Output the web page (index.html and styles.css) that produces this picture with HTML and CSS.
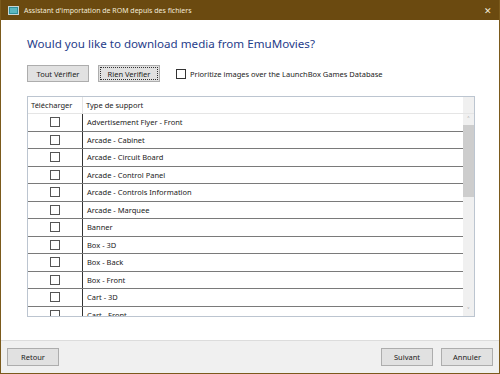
FILE: index.html
```html
<!DOCTYPE html>
<html lang="fr">
<head>
    <meta charset="UTF-8">
    <title>Assistant d'importation de ROM depuis des fichiers</title>
    <link rel="stylesheet" href="styles.css">
</head>
<body>
<div class="window">
    <div class="titlebar">
        <svg class="app-icon" width="11" height="9" viewBox="0 0 11 9">
            <rect x="0.5" y="0.5" width="10" height="8" fill="#2f8f9a" stroke="#c8d6d6"/>
            <rect x="2" y="2" width="7" height="5" fill="#5bb7bf"/>
        </svg>
        <span class="title">Assistant d'importation de ROM depuis des fichiers</span>
        <span class="close">&#x2715;</span>
    </div>

    <div class="content">
        <h1>Would you like to download media from EmuMovies?</h1>

        <div class="actions">
            <button class="btn">Tout Vérifier</button>
            <button class="btn focused">Rien Verifier</button>
            <label class="check-label"><span class="box"></span>Prioritize images over the LaunchBox Games Database</label>
        </div>

        <div class="grid">
            <div class="grid-head">
                <div class="col-dl">Télécharger</div>
                <div class="col-type">Type de support</div>
                <div class="col-pad"></div>
            </div>
            <div class="grid-body">
                <div class="rows">
                    <div class="row"><div class="cell-dl"><span class="box"></span></div><div class="cell-type">Advertisement Flyer - Front</div></div>
                    <div class="row"><div class="cell-dl"><span class="box"></span></div><div class="cell-type">Arcade - Cabinet</div></div>
                    <div class="row"><div class="cell-dl"><span class="box"></span></div><div class="cell-type">Arcade - Circuit Board</div></div>
                    <div class="row"><div class="cell-dl"><span class="box"></span></div><div class="cell-type">Arcade - Control Panel</div></div>
                    <div class="row"><div class="cell-dl"><span class="box"></span></div><div class="cell-type">Arcade - Controls Information</div></div>
                    <div class="row"><div class="cell-dl"><span class="box"></span></div><div class="cell-type">Arcade - Marquee</div></div>
                    <div class="row"><div class="cell-dl"><span class="box"></span></div><div class="cell-type">Banner</div></div>
                    <div class="row"><div class="cell-dl"><span class="box"></span></div><div class="cell-type">Box - 3D</div></div>
                    <div class="row"><div class="cell-dl"><span class="box"></span></div><div class="cell-type">Box - Back</div></div>
                    <div class="row"><div class="cell-dl"><span class="box"></span></div><div class="cell-type">Box - Front</div></div>
                    <div class="row"><div class="cell-dl"><span class="box"></span></div><div class="cell-type">Cart - 3D</div></div>
                    <div class="row"><div class="cell-dl"><span class="box"></span></div><div class="cell-type">Cart - Front</div></div>
                </div>
                <div class="scrollbar">
                    <span class="arrow">&#x2C4;</span>
                    <div class="track"><div class="thumb"></div></div>
                    <span class="arrow">&#x2C5;</span>
                </div>
            </div>
        </div>
    </div>

    <div class="footer">
        <button class="btn">Retour</button>
        <div class="footer-right">
            <button class="btn">Suivant</button>
            <button class="btn">Annuler</button>
        </div>
    </div>
</div>
</body>
</html>
```

FILE: styles.css
```css
html, body {
    margin: 0;
    padding: 0;
}

body {
    font-family: "Noto Sans", "Open Sans", sans-serif;
    background: #ffffff;
    color: #1a1a1a;
}

.window {
    width: 500px;
    height: 374px;
    box-sizing: border-box;
    border: 1px solid #7b5a1c;
    border-top: none;
    display: flex;
    flex-direction: column;
    background: #ffffff;
}

.titlebar {
    height: 20px;
    background: #6b4a10;
    display: flex;
    align-items: center;
    padding: 0 7px 0 7px;
    color: #f3ead8;
    font-size: 7px;
}

.app-icon {
    margin-right: 5px;
}

.title {
    flex: 1;
}

.close {
    font-size: 9px;
    color: #f3ead8;
}

.content {
    flex: 1;
    padding: 16px 0 0 26px;
}

h1 {
    margin: 0;
    font-size: 11.6px;
    font-weight: normal;
    color: #1f3d8a;
    height: 15px;
    line-height: 15px;
}

.actions {
    display: flex;
    align-items: center;
    margin-top: 14px;
    height: 17px;
}

.btn {
    font-family: inherit;
    font-size: 7.5px;
    color: #1a1a1a;
    background: #e1e1e1;
    border: 1px solid #adadad;
    width: 62px;
    height: 17px;
    padding: 0;
    margin: 0 9px 0 0;
}

.btn.focused {
    outline: 1px dotted #333;
    outline-offset: -3px;
}

.check-label {
    display: flex;
    align-items: center;
    font-size: 7.5px;
    margin-left: 7px;
}

.box {
    display: inline-block;
    width: 8px;
    height: 8px;
    border: 1px solid #333;
    background: #fff;
    margin-right: 4px;
}

.grid {
    margin-top: 14px;
    width: 446px;
    border: 1px solid #bcc5d0;
    font-size: 7.5px;
}

.grid-head {
    display: flex;
    height: 16px;
    border-bottom: 1px solid #e5e5e5;
}

.grid-head > div {
    display: flex;
    align-items: center;
    padding-left: 3px;
}

.col-dl {
    width: 51px;
    border-right: 1px solid #e5e5e5;
}

.col-type {
    flex: 1;
}

.col-pad {
    width: 11px;
    background: #f0f0f0;
    padding: 0 !important;
}

.grid-body {
    display: flex;
    height: 202px;
    overflow: hidden;
}

.rows {
    flex: 1;
}

.row {
    display: flex;
    height: 17.5px;
    box-sizing: border-box;
    border-bottom: 1px solid #7a7a7a;
}

.cell-dl {
    width: 54px;
    display: flex;
    align-items: center;
    justify-content: center;
    border-right: 1px solid #333;
}

.cell-dl .box {
    margin: 0;
    border-color: #555;
}

.cell-type {
    flex: 1;
    display: flex;
    align-items: center;
    padding-left: 4px;
}

.scrollbar {
    width: 11px;
    background: #f0f0f0;
    display: flex;
    flex-direction: column;
    align-items: center;
}

.arrow {
    height: 11px;
    line-height: 11px;
    font-size: 8px;
    color: #a0a0a0;
}

.track {
    flex: 1;
    width: 100%;
}

.thumb {
    height: 72px;
    background: #cdcdcd;
}

.footer {
    height: 32px;
    background: #f0f0f0;
    border-top: 1px solid #dcdcdc;
    display: flex;
    align-items: center;
    justify-content: space-between;
    padding: 0 0 0 6px;
}

.footer .btn {
    width: 52px;
    height: 18px;
}

.footer-right {
    display: flex;
    gap: 8px;
    margin-right: 6px;
}

.footer-right .btn {
    margin: 0;
}
```
